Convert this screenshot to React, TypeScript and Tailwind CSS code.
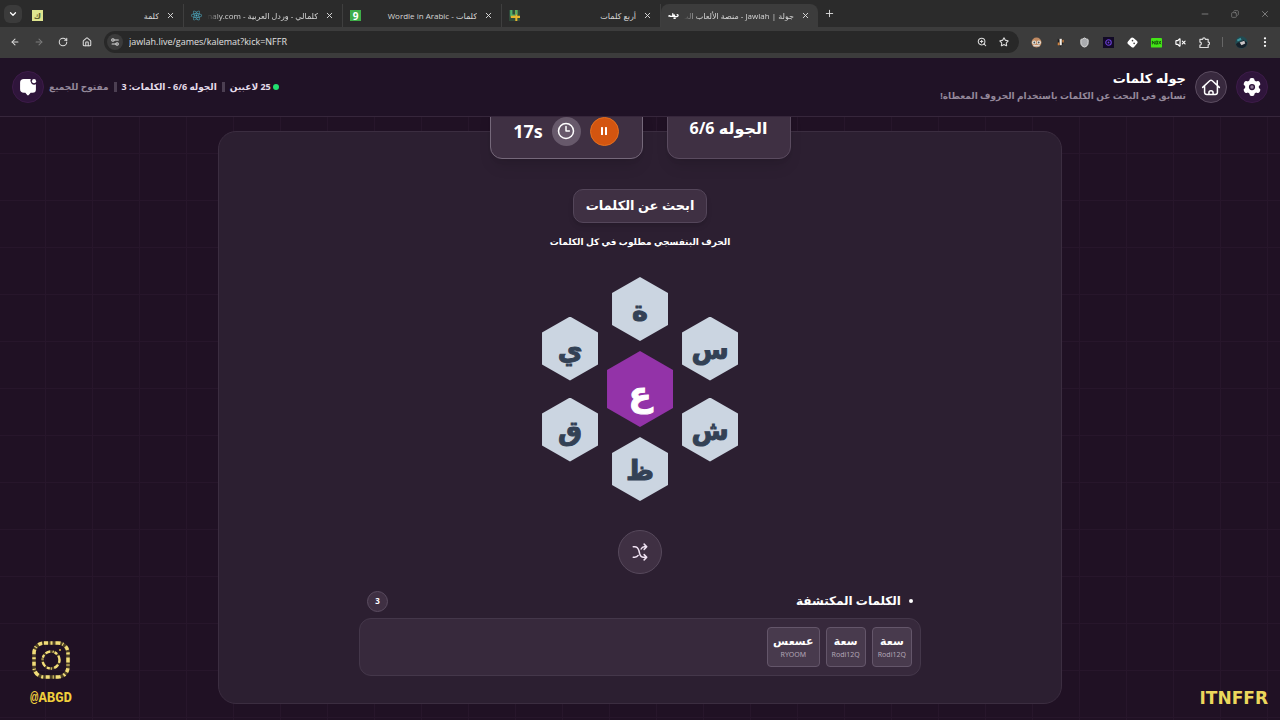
import React from "react";
import {
  LuArrowLeft,
  LuArrowRight,
  LuChevronDown,
  LuClock3,
  LuCopy,
  LuHouse,
  LuMinus,
  LuPlus,
  LuRotateCw,
  LuSettings2,
  LuShield,
  LuStar,
  LuVolumeX,
  LuX,
  LuZoomIn,
} from "react-icons/lu";
import { FaReact } from "react-icons/fa";
import { BsThreeDotsVertical } from "react-icons/bs";

const UI = "font-['Open_Sans','DejaVu_Sans',sans-serif]";

type Tab = { title: string; icon: React.ReactNode; active?: boolean; fade?: boolean; dir?: "ltr" | "rtl" };

const tabs: Tab[] = [
  {
    title: "كلمة",
    icon: <span className="grid size-[11px] place-items-center bg-[#dfe58f] text-[8px] font-bold leading-none text-[#5d6130]">ك</span>,
  },
  { title: "كلمالي - وردل العربية - naly.com", icon: <FaReact className="size-[11px] text-[#4fb3cc]" />, fade: true },
  {
    title: "Wordle in Arabic - كلمات",
    dir: "ltr",
    icon: <span className="grid size-[11px] place-items-center bg-[#3fae49] text-[10px] font-bold leading-none text-white">9</span>,
  },
  {
    title: "أربع كلمات",
    icon: (
      <svg viewBox="0 0 12 12" className="size-[11px]">
        <rect width="12" height="12" fill="#2f4a3a" />
        <path d="M2.5 0v6h4" stroke="#4fb06a" strokeWidth="2.4" fill="none" />
        <path d="M8 0v12M2 7.5h10" stroke="#e6b52f" strokeWidth="2.2" fill="none" />
        <path d="M8 0v5" stroke="#4fb06a" strokeWidth="2.2" />
      </svg>
    ),
  },
  {
    title: "جولة | Jawlah - منصة الألعاب الت",
    icon: (
      <svg viewBox="0 0 12 12" className="size-[11px]" fill="none" stroke="#fff" strokeWidth="1.400" strokeLinecap="round">
        <path d="M.8 6.500c1-.6 1.600-.4 1.400.5M2.200 7h3V4M5.200 7c1.500.2 2.300-.5 1.800-1.400-.8-.6-1.500.9-.3 1.600M8 7.200h1.700c1.500 0 1.800-2 .3-2.200M6.500 9h1.400" />
      </svg>
    ),
    active: true,
    fade: true,
  },
];

function BrowserTab({ tab }: { tab: Tab }) {
  return (
    <div
      role="tab"
      aria-selected={!!tab.active}
      className={
        "flex h-full items-center gap-[5px] px-[7px] " +
        (tab.active ? "w-[157px] rounded-t-lg bg-[#3c3c3c]" : "w-[159px] border-r border-[#3f3f3f]")
      }
    >
      {tab.icon}
      <span
        dir={tab.dir ?? "rtl"}
        className={
          "min-w-0 flex-1 overflow-hidden whitespace-nowrap text-right text-[8px] leading-4 text-[#d6d6d6] " +
          (tab.fade ? "[mask-image:linear-gradient(to_right,transparent,black_14px)]" : "")
        }
      >
        {tab.title}
      </span>
      <button aria-label="Close tab" className="grid size-3 place-items-center text-[#dddddd]">
        <LuX className="size-[9px]" strokeWidth={2.5} />
      </button>
    </div>
  );
}

function Browser() {
  return (
    <div dir="ltr" className={"bg-[#2b2b2b] " + UI}>
      <div className="flex h-[27px] items-center pl-1">
        <button aria-label="Search tabs" className="mr-[3px] grid size-[18px] place-items-center rounded-md bg-[#3b3b3b] text-white">
          <LuChevronDown className="size-2.5" strokeWidth={3} />
        </button>
        <div role="tablist" className="flex h-full items-stretch pt-1">
          {tabs.map((t) => (
            <BrowserTab key={t.title} tab={t} />
          ))}
        </div>
        <button aria-label="New tab" className="ml-[5px] grid size-3 place-items-center text-[#dddddd]">
          <LuPlus className="size-[11px]" />
        </button>
        <div className="ml-auto flex items-center gap-5 pr-2.5 text-[#8a8a8a]">
          <button aria-label="Minimize" className="grid size-2.5 place-items-center"><LuMinus className="size-2.5" /></button>
          <button aria-label="Restore" className="grid size-2.5 place-items-center"><LuCopy className="size-2 -scale-x-100" /></button>
          <button aria-label="Close" className="grid size-2.5 place-items-center"><LuX className="size-2.5" /></button>
        </div>
      </div>
      <div className="flex h-[31px] items-center bg-[#3c3c3c] pb-px pl-[9px] pr-[9px] text-[#dcdcdc]">
        <div className="flex items-center gap-3">
          <button aria-label="Back" className="p-px"><LuArrowLeft className="size-2.5" strokeWidth={2.5} /></button>
          <button aria-label="Forward" className="p-px text-[#7c7c7c]"><LuArrowRight className="size-2.5" strokeWidth={2.5} /></button>
          <button aria-label="Reload" className="p-px"><LuRotateCw className="size-2.5" strokeWidth={2.5} /></button>
          <button aria-label="Home" className="p-px"><LuHouse className="size-2.5" strokeWidth={2.5} /></button>
        </div>
        <div className="ml-[11px] flex h-[22px] flex-1 items-center gap-1.5 rounded-full bg-[#282828] pl-[3px] pr-2.5">
          <button aria-label="Site information" className="grid size-4 place-items-center rounded-full bg-[#3b3b3b]">
            <LuSettings2 className="size-2.5" strokeWidth={2.5} />
          </button>
          <input aria-label="Address" defaultValue="jawlah.live/games/kalemat?kick=NFFR" className="h-4 min-w-0 flex-1 bg-transparent text-[9px] leading-4 text-[#e0e0e0] outline-none" />
          <button aria-label="Zoom" className="mr-1.5"><LuZoomIn className="size-2.5" strokeWidth={2.5} /></button>
          <button aria-label="Bookmark"><LuStar className="size-2.5" strokeWidth={2.5} /></button>
        </div>
        <div className="ml-3 flex items-center gap-[13px]">
          <svg viewBox="0 0 12 12" className="size-[11px]">
            <circle cx="6" cy="6" r="5.4" fill="#c08a62" />
            <circle cx="3.4" cy="6" r="2.2" fill="#e8e4da" /><circle cx="8.6" cy="6" r="2.2" fill="#e8e4da" />
            <circle cx="3.6" cy="6" r="1" fill="#49535a" /><circle cx="8.4" cy="6" r="1" fill="#49535a" />
            <path d="M2.5 9.5h7" stroke="#dedede" strokeWidth="1.4" />
          </svg>
          <svg viewBox="0 0 12 12" className="size-[11px]">
            <path d="M3 2l3 2 3-2v5l-3 4-3-4z" fill="#1d1b1b" /><path d="M5 2h2.4v7H5z" fill="#f3ede6" /><path d="M3 6h2v3H3zM8 3h1.5v3H8z" fill="#d2833d" />
          </svg>
          <LuShield className="size-[11px] fill-[#a9abae] text-[#e2e2e2]" />
          <svg viewBox="0 0 12 12" className="size-[11px]">
            <rect width="12" height="12" fill="#120a26" /><circle cx="6" cy="6" r="3" stroke="#6b3fd6" strokeWidth="1.2" fill="none" /><circle cx="6" cy="6" r="1" fill="#6b3fd6" />
          </svg>
          <svg viewBox="0 0 12 12" className="size-[11px]">
            <rect x="2.3" y="2.3" width="7.4" height="7.4" rx="1.4" transform="rotate(40 6 6)" fill="#fff" stroke="#fff" strokeWidth="1.6" /><circle cx="6" cy="4" r=".9" fill="#444" /><circle cx="7.8" cy="7" r=".9" fill="#444" />
          </svg>
          <svg viewBox="0 0 12 12" className="size-[11px]">
            <rect y="1" width="12" height="10.5" rx="1" fill="#43e516" /><path d="M1.5 8V4.3L4.2 8V4.3M5.4 4.5h1.8v3.2H5.4zM8.4 4.3l2.4 3.6M10.8 4.3L8.4 7.9" stroke="#14510a" strokeWidth="1" fill="none" />
          </svg>
          <LuVolumeX className="size-[11px] text-white" strokeWidth={2.5} />
          <svg viewBox="0 0 12 12" className="size-[11px]" fill="none" stroke="currentColor" strokeWidth="1.300" strokeLinejoin="round">
            <path d="M1 2.500h3a1.500 1.500 0 013 0h3v3a1.500 1.500 0 010 3v3H1V8.700a1.600 1.600 0 000-3.200z" />
          </svg>
        </div>
        <span className="ml-3 h-2.5 w-px bg-[#666666]" />
        <svg viewBox="0 0 14 14" className="ml-3 size-[13px]">
          <circle cx="7" cy="7" r="6.6" fill="#214b52" /><path d="M1 9c3-4 6-1 8-5l4 3c0 4-3 6-6 6-3 0-5-1-6-4z" fill="#15202a" /><path d="M5 7l5-2 1 3-4 2z" fill="#c9c4c6" /><path d="M2 4l4-2 1 2-4 2z" fill="#3e97a0" />
        </svg>
        <button aria-label="Menu" className="ml-[11px] text-white"><BsThreeDotsVertical className="size-3" /></button>
      </div>
    </div>
  );
}

function GearIcon() {
  return (
    <svg viewBox="0 0 24 24" className="size-5">
      <g fill="currentColor">
        <circle cx="12" cy="12" r="8.300" />
        <rect x="9" y="1.200" width="6" height="21.600" rx="2.400" />
        <rect x="9" y="1.200" width="6" height="21.600" rx="2.400" transform="rotate(60 12 12)" />
        <rect x="9" y="1.200" width="6" height="21.600" rx="2.400" transform="rotate(120 12 12)" />
      </g>
      <circle cx="12" cy="12" r="2.900" fill="#8d7b96" stroke="#2f153b" strokeWidth="1.700" />
    </svg>
  );
}

function HouseIcon() {
  return (
    <svg viewBox="0 0 24 24" className="size-5" fill="none" stroke="currentColor" strokeWidth="1.8" strokeLinecap="round" strokeLinejoin="round">
      <path d="M2 12.500l8.500-8a2.200 2.200 0 013 0l8.500 8M4.300 10.500v8A2.500 2.500 0 006.800 21h10.400a2.500 2.500 0 002.500-2.500v-8M19.500 9.500V4.500M9.500 21v-2a2.500 2.500 0 015 0v2" />
    </svg>
  );
}

function ChatIcon() {
  return (
    <svg viewBox="0 0 24 24" className="size-5" fill="currentColor">
      <path d="M7 2.500h8.300a4.700 4.700 0 006.200 6.300V15a4 4 0 01-4 4h-2.300l-2.300 2.600a1.300 1.300 0 01-1.900 0L8.800 19H7a4.500 4.500 0 01-4.500-4.500V7A4.500 4.500 0 017 2.500z" />
      <circle cx="19.200" cy="5" r="2.500" />
    </svg>
  );
}

function ShuffleIcon() {
  return (
    <svg viewBox="0 0 24 24" className="size-[18px]" fill="none" stroke="currentColor" strokeWidth="2" strokeLinecap="round" strokeLinejoin="round">
      <path d="M3 5h2c3 0 4.500 2 5.500 5l1 4c1 3.500 2.500 5 5 5H21M3 19h2c2 0 3.500-.8 4.500-2.400M13.500 8c1-2 2-3 4-3H21M17.500 1.500L21 5l-3.500 3.500M17.500 15.500L21 19l-3.500 3.500" />
    </svg>
  );
}

function Header() {
  return (
    <header className="flex h-[59px] shrink-0 items-center justify-between border-b border-[#36263b] bg-[#201226] px-3">
      <div className="flex items-center gap-[9px]">
        <button aria-label="الإعدادات" className="grid size-8 place-items-center rounded-full border border-[#3d1b49] bg-[#2f153b] text-white"><GearIcon /></button>
        <a href="#" aria-label="الرئيسية" className="grid size-8 place-items-center rounded-full border border-[#5b4c60] bg-[#38293e] text-white"><HouseIcon /></a>
        <div>
          <h1 className="text-[13px] font-bold leading-[18px] text-white">جوله كلمات</h1>
          <p className="text-[9px] font-bold leading-[18px] text-[#94889a]">تسابق في البحث عن الكلمات باستخدام الحروف المعطاة!</p>
        </div>
      </div>
      <div className="flex items-center gap-[5px] text-[9px] font-bold text-[#e5dcea]">
        <div className="flex items-center gap-0.5">
          <span className="size-1.5 rounded-full bg-[#22e06f]" />
          <span>25 لاعبين</span>
        </div>
        <span className="h-2.5 w-[3px] bg-[#4c3f52]" />
        <span>الجوله 6/6 - الكلمات: 3</span>
        <span className="h-2.5 w-[3px] bg-[#4c3f52]" />
        <span className="text-[#94889a]">مفتوح للجميع</span>
        <button aria-label="المحادثة" className="grid size-8 place-items-center rounded-full border border-[#3d1b49] bg-[#2f153b] text-white"><ChatIcon /></button>
      </div>
    </header>
  );
}

const hexShape = "grid place-items-center [clip-path:polygon(50%_0,100%_25%,100%_75%,50%_100%,0_75%,0_25%)]";

function Hex({ letter }: { letter: string }) {
  return <button className={"h-16 w-14 bg-[#cbd5e1] text-[27px] font-bold leading-none text-[#334155] [-webkit-text-stroke:1px] " + hexShape}>{letter}</button>;
}

function Board() {
  return (
    <div className="mt-[27px] flex items-center justify-center gap-[9px]">
      <div className="flex flex-col gap-[17px]"><Hex letter="س" /><Hex letter="ش" /></div>
      <div className="flex flex-col items-center gap-[10px]">
        <Hex letter="ة" />
        <button className={"h-[76px] w-[66px] bg-[#9333a8] pt-2 text-[34px] font-bold leading-none text-white [-webkit-text-stroke:1px] " + hexShape}>ع</button>
        <Hex letter="ظ" />
      </div>
      <div className="flex flex-col gap-[17px]"><Hex letter="ي" /><Hex letter="ق" /></div>
    </div>
  );
}

const found = [
  { word: "سعة", player: "Rodi12Q" },
  { word: "سعة", player: "Rodi12Q" },
  { word: "عسعس", player: "RYOOM" },
];

function SocialBadge() {
  return (
    <div dir="ltr" className="flex w-[102px] flex-col items-center gap-3 text-[#f0cf3c]">
      <svg viewBox="0 0 40 40" className="size-10" fill="none">
        <rect x="3" y="3" width="34" height="34" rx="10" stroke="#4d4024" strokeWidth="3.500" />
        <rect x="3" y="3" width="34" height="34" rx="10" stroke="#f1dc7a" strokeWidth="3.500" strokeDasharray="4 2.500 2 3 5 2 1 3" />
        <circle cx="20" cy="20" r="8.500" stroke="#4d4024" strokeWidth="2.400" />
        <circle cx="20" cy="20" r="8.500" stroke="#f1dc7a" strokeWidth="2.400" strokeDasharray="3 2 5 2.500 1 1" />
        <circle cx="29" cy="10" r="1" fill="#d9b93e" />
      </svg>
      <span className="font-['Liberation_Mono',monospace] text-[14px] font-bold leading-3">@ABGD</span>
    </div>
  );
}

export default function App() {
  return (
    <div className="flex h-screen flex-col overflow-hidden bg-[#201124]">
      <Browser />
      <div dir="rtl" className="flex min-h-0 flex-1 flex-col font-['Noto_Sans','DejaVu_Sans',sans-serif]">
        <Header />
        <main className="grid min-h-0 flex-1 grid-cols-[1fr_66%_1fr] overflow-hidden bg-[linear-gradient(to_right,#27162b_1px,transparent_1px),linear-gradient(to_bottom,#27162b_1px,transparent_1px)] bg-[size:47px_47px] bg-[position:45px_36px] pb-4 pt-[14px]">
          <div dir="ltr" className="flex items-end justify-end pr-3">
            <span className="font-['DejaVu_Sans',sans-serif] text-[17px] font-bold leading-3 text-[#ecd75c]">ITNFFR</span>
          </div>
          <section className="flex flex-col rounded-[18px] border border-[#3b2d40] bg-[#2c1f31]">
            <div className="-mt-[33px] flex h-[60px] justify-center gap-6">
              <div className="flex w-[124px] justify-center rounded-xl border border-[#5a4b5f] bg-[#3f3043] pt-4 text-[16px] font-bold leading-6 text-white shadow-lg">
                الجوله 6/6
              </div>
              <div className="flex w-[153px] items-center justify-center gap-[9px] rounded-xl border border-[#75687a] bg-[#3f3043] pt-1 text-white shadow-lg">
                <button aria-label="إيقاف مؤقت" className="grid size-[29px] place-items-center rounded-full border border-[#e5701f] bg-[#d35510]">
                  <svg viewBox="0 0 10 10" className="size-2.5" fill="currentColor"><rect x="2" y="1" width="2" height="8" rx=".5" /><rect x="6" y="1" width="2" height="8" rx=".5" /></svg>
                </button>
                <span className="grid size-[29px] place-items-center rounded-full bg-[#67596b]"><LuClock3 className="size-[18px]" /></span>
                <span dir="ltr" className="text-[18px] font-bold leading-6">17s</span>
              </div>
            </div>
            <div className="mt-[30px] flex flex-col items-center">
              <h2 className="flex h-[34px] items-center rounded-[10px] border border-[#54465a] bg-[#3f3043] px-3 text-[13px] font-bold text-white shadow-md">ابحث عن الكلمات</h2>
              <p className="mt-[11px] text-[9px] font-bold leading-4 text-white">الحرف البنفسجي مطلوب في كل الكلمات</p>
            </div>
            <Board />
            <button aria-label="خلط الحروف" className="mx-auto mt-[29px] grid size-11 shrink-0 place-items-center rounded-full border border-[#57495c] bg-[#3f3043] text-[#f0e3f3]"><ShuffleIcon /></button>
            <div className="mx-auto mt-4 w-2/3">
              <div className="flex h-[22px] items-center justify-between px-2">
                <h3 className="flex items-center gap-2 text-[12px] font-bold text-white"><span className="size-1 rounded-full bg-white" />الكلمات المكتشفة</h3>
                <span className="grid size-[21px] place-items-center rounded-full border border-[#5a4c60] bg-[#3f3043] text-[8px] font-bold text-white">3</span>
              </div>
              <ul className="mt-1.5 flex h-[58px] items-start gap-1.5 rounded-xl border border-[#44374a] bg-[#37293c] p-2">
                {found.map((f, i) => (
                  <li key={i} className="flex h-10 min-w-10 flex-col items-center justify-center rounded border border-[#64566a] bg-[#483a4d] px-[5px]">
                    <span className="text-[11px] font-bold leading-4 text-white">{f.word}</span>
                    <span className="text-[7px] leading-3 text-[#b2a6b6]">{f.player}</span>
                  </li>
                ))}
              </ul>
            </div>
          </section>
          <div className="flex items-end justify-end"><SocialBadge /></div>
        </main>
      </div>
    </div>
  );
}
